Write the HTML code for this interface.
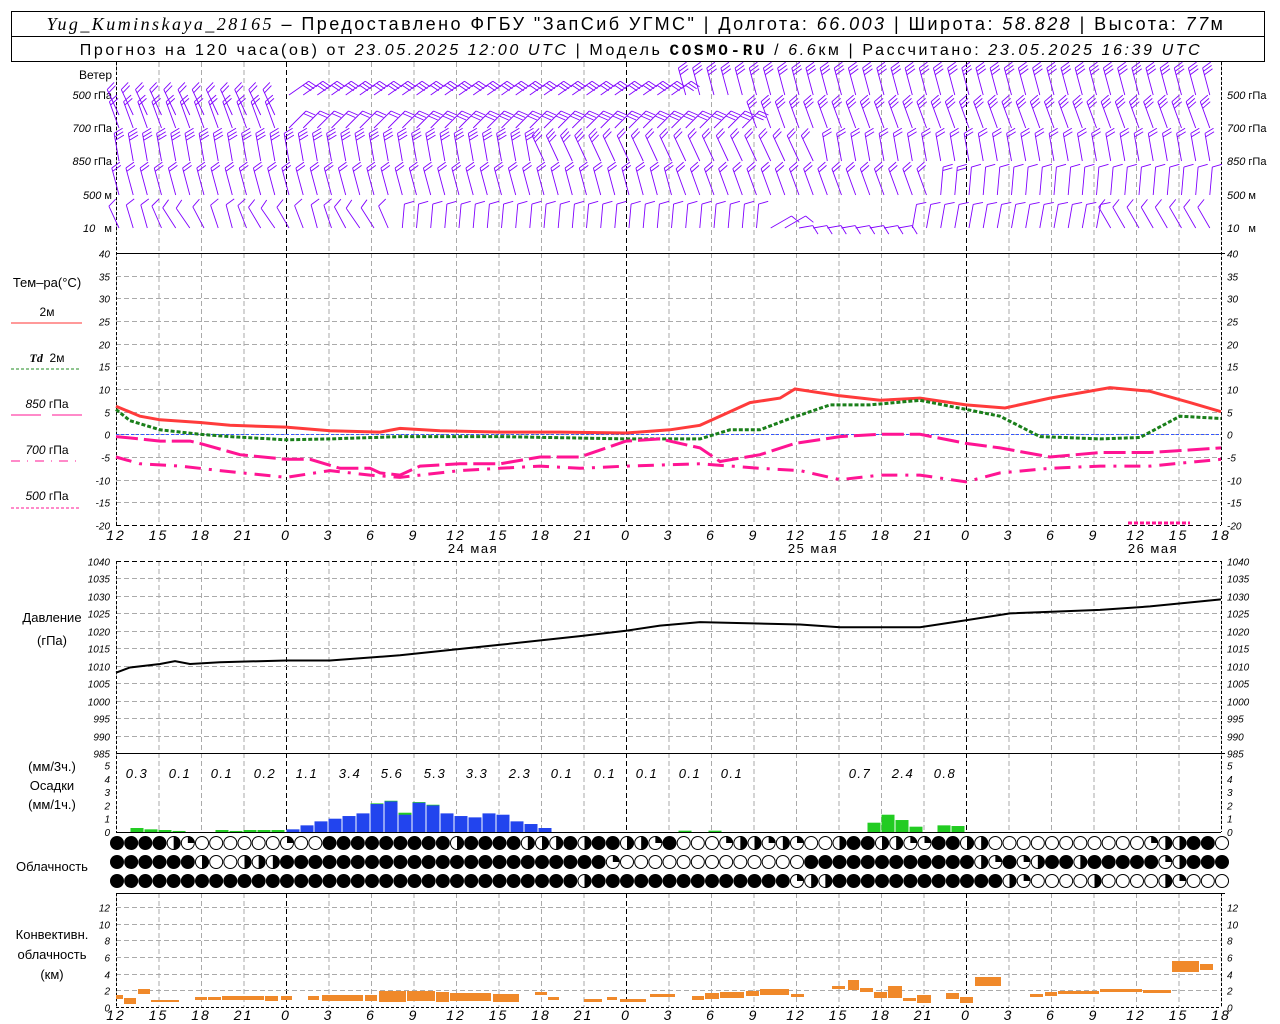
<!DOCTYPE html>
<html><head><meta charset="utf-8"><style>
body{margin:0;background:#fff;width:1280px;height:1024px;overflow:hidden;font-family:"Liberation Sans",sans-serif}
svg{display:block}
</style></head><body>
<svg id="s" width="1280" height="1024" xmlns="http://www.w3.org/2000/svg" font-family="Liberation Sans, sans-serif">
<rect x="0" y="0" width="1280" height="1024" fill="#fff"/>
<rect x="11.5" y="11.5" width="1253" height="50" fill="none" stroke="#000"/>
<line x1="11" y1="36.5" x2="1265" y2="36.5" stroke="#000"/>
<text x="636" y="30" text-anchor="middle" font-size="18" letter-spacing="2.45"><tspan font-family="Liberation Serif" font-style="italic">Yug_Kuminskaya_28165</tspan> – Предоставлено ФГБУ "ЗапСиб УГМС" | Долгота: <tspan font-style="italic">66.003</tspan> | Широта: <tspan font-style="italic">58.828</tspan> | Высота: <tspan font-style="italic">77</tspan>м</text>
<text x="641" y="55" text-anchor="middle" font-size="16" letter-spacing="2.6">Прогноз на 120 часа(ов) от <tspan font-style="italic">23.05.2025 12:00 UTC</tspan> | Модель <tspan font-family="Liberation Mono" font-weight="bold">COSMO-RU</tspan> / <tspan font-style="italic">6.6</tspan>км | Рассчитано: <tspan font-style="italic">23.05.2025 16:39 UTC</tspan></text>
<g font-size="12" text-anchor="end">
<text x="112" y="79">Ветер</text>
<text x="112" y="99" font-size="11"><tspan font-style="italic">500</tspan> гПа</text>
<text x="112" y="132" font-size="11"><tspan font-style="italic">700</tspan> гПа</text>
<text x="112" y="165" font-size="11"><tspan font-style="italic">850</tspan> гПа</text>
<text x="112" y="199" font-size="11"><tspan font-style="italic">500</tspan> м</text>
<text x="112" y="232" font-size="11"><tspan font-style="italic">10</tspan> &#160;&#160;м</text>
</g>
<g font-size="11">
<text x="1227" y="99"><tspan font-style="italic">500</tspan> гПа</text>
<text x="1227" y="132"><tspan font-style="italic">700</tspan> гПа</text>
<text x="1227" y="165"><tspan font-style="italic">850</tspan> гПа</text>
<text x="1227" y="199"><tspan font-style="italic">500</tspan> м</text>
<text x="1227" y="232"><tspan font-style="italic">10</tspan> &#160;&#160;м</text>
</g>
<g font-size="13" text-anchor="middle">
<text x="47" y="287">Тем–ра(°С)</text>
<text x="47" y="316" font-size="12">2м</text>
<text x="47" y="362" font-size="12"><tspan font-style="italic" font-weight="bold" font-family="Liberation Serif">Td</tspan> &#160;2м</text>
<text x="47" y="408" font-size="12"><tspan font-style="italic">850</tspan> гПа</text>
<text x="47" y="454" font-size="12"><tspan font-style="italic">700</tspan> гПа</text>
<text x="47" y="500" font-size="12"><tspan font-style="italic">500</tspan> гПа</text>
<text x="52" y="622">Давление</text>
<text x="52" y="645">(гПа)</text>
<text x="52" y="771">(мм/3ч.)</text>
<text x="52" y="790">Осадки</text>
<text x="52" y="809">(мм/1ч.)</text>
<text x="52" y="871">Облачность</text>
<text x="52" y="939">Конвективн.</text>
<text x="52" y="959">облачность</text>
<text x="52" y="979">(км)</text>
</g>
<line x1="11" y1="323" x2="82" y2="323" stroke="#ff3333" stroke-width="1"/>
<line x1="11" y1="369" x2="79" y2="369" stroke="#228b22" stroke-dasharray="3,2"/>
<line x1="11" y1="415" x2="41" y2="415" stroke="#ff1493"/><line x1="52" y1="415" x2="82" y2="415" stroke="#ff1493"/>
<line x1="11" y1="461" x2="82" y2="461" stroke="#ff1493" stroke-dasharray="9,7,1,7"/>
<line x1="11" y1="508" x2="79" y2="508" stroke="#ff1493" stroke-dasharray="3,2"/>
<g id="g"></g>
</svg>
<script>
const NS="http://www.w3.org/2000/svg",G=document.getElementById('g');
function el(t,a,txt){const e=document.createElementNS(NS,t);for(const k in a)e.setAttribute(k,a[k]);if(txt!=null)e.textContent=txt;G.appendChild(e);return e;}
const L=116,R=1221,PX=14.1667;
function X(h){return L+h*PX}
const panels=[[62,253],[253,525],[561,753],[753,832],[893,1007]];
for(let k=0;k<=26;k++){const x=L+42.5*k+0.5;const mid=(k%8==4);
 for(const p of panels){el('line',{x1:x,y1:p[0],x2:x,y2:p[1],stroke:mid?'#000':'#aaa','stroke-dasharray':'5,3','stroke-width':1});}}
function TY(t){return 253+(40-t)*4.5333}
for(let t=40;t>=-20;t-=5){const y=Math.round(TY(t))+0.5;
 if(t<40)el('line',{x1:L,y1:y,x2:R,y2:y,stroke:t==-20?'#000':'#aaa','stroke-dasharray':'5,3'});
 el('text',{x:110,y:y+4,'font-size':10,'font-style':'italic','text-anchor':'end'},t);
 el('text',{x:1227,y:y+4,'font-size':10,'font-style':'italic'},t);}
el('line',{x1:L,y1:253.5,x2:R+4,y2:253.5,stroke:'#000'});
function PY(p){return 561+(1040-p)*3.4909}
for(let p=1040;p>=985;p-=5){const y=Math.round(PY(p))+0.5;
 if(p<1040&&p>985)el('line',{x1:L,y1:y,x2:R,y2:y,stroke:'#aaa','stroke-dasharray':'5,3'});
 if(p==1040)el('line',{x1:L,y1:y,x2:R,y2:y,stroke:'#000','stroke-dasharray':'5,3'});
 el('text',{x:110,y:y+4,'font-size':10,'font-style':'italic','text-anchor':'end'},p);
 el('text',{x:1227,y:y+4,'font-size':10,'font-style':'italic'},p);}
el('line',{x1:L,y1:753.5,x2:R+4,y2:753.5,stroke:'#000'});
for(let m=0;m<=5;m++){const y=832-m*13.3;el('text',{x:110,y:y+4,'font-size':10,'font-style':'italic','text-anchor':'end'},m);el('text',{x:1227,y:y+4,'font-size':10,'font-style':'italic'},m);}
el('line',{x1:L,y1:832.5,x2:R,y2:832.5,stroke:'#000'});
function CY(k){return 1007-k*8.35}
for(let k=0;k<=12;k+=2){const y=Math.round(CY(k))+0.5;
 if(k>0)el('line',{x1:L,y1:y,x2:R,y2:y,stroke:'#aaa','stroke-dasharray':'5,3'});else el('line',{x1:L,y1:y,x2:R,y2:y,stroke:'#000','stroke-dasharray':'3,2'});
 el('text',{x:110,y:y+4,'font-size':10,'font-style':'italic','text-anchor':'end'},k);el('text',{x:1227,y:y+4,'font-size':10,'font-style':'italic'},k);}
el('line',{x1:L,y1:893.5,x2:R+4,y2:893.5,stroke:'#000'});
for(const x of [L+0.5,R+0.5]){for(const p of [[62,525],[561,832],[893,1007]])el('line',{x1:x,y1:p[0],x2:x,y2:p[1],stroke:'#000','stroke-dasharray':'3,2'});}
const hrs=[12,15,18,21,0,3,6,9];
for(let k=0;k<=26;k++){const x=L+42.5*k;const h=hrs[k%8];
 el('text',{x:x,y:540,'font-size':14,'font-style':'italic','text-anchor':'middle','letter-spacing':'2'},h);
 el('text',{x:x,y:1020,'font-size':14,'font-style':'italic','text-anchor':'middle','letter-spacing':'2'},h);}
[['24 мая',473],['25 мая',813],['26 мая',1153]].forEach(d=>el('text',{x:d[1],y:553,'font-size':13,'text-anchor':'middle','letter-spacing':'1.5'},d[0]));
el('line',{x1:L,y1:434.5,x2:R,y2:434.5,stroke:'#3355ff','stroke-dasharray':'3,2'});
function line(pts,f,attrs){const d=pts.map(p=>p[0]+','+f(p[1]).toFixed(1)).join(' ');const a={points:d,fill:'none'};for(const k in attrs)a[k]=attrs[k];el('polyline',a);}
const T2=[[116,6.2],[140,4],[160,3.2],[200,2.6],[230,2],[286,1.6],[330,0.8],[380,0.5],[400,1.3],[440,0.8],[500,0.5],[560,0.5],[626,0.3],[670,1],[700,2],[720,4],[750,7],[780,8],[795,10],[840,8.5],[880,7.5],[920,8],[966,6.5],[1005,5.8],[1050,8],[1110,10.3],[1150,9.5],[1190,7],[1221,5]];
line(T2,TY,{stroke:'#ff3b3b','stroke-width':3});
const TD=[[116,5.5],[130,3],[160,1],[200,0],[230,-0.5],[286,-1.2],[330,-1],[400,-0.5],[500,-0.5],[626,-1],[700,-1],[730,1],[760,1],[790,3.5],[830,6.5],[870,6.5],[920,7.5],[966,5.5],[1000,4],[1040,-0.5],[1100,-1],[1140,-0.7],[1180,4],[1221,3.5]];
line(TD,TY,{stroke:'#1a7f1a','stroke-width':3,'stroke-dasharray':'4,2'});
const T85=[[116,-0.5],[140,-1],[160,-1.5],[190,-1.5],[200,-2],[240,-4.5],[286,-5.5],[310,-5.5],[340,-7.5],[370,-7.5],[380,-8.5],[400,-9],[420,-7],[460,-6.5],[500,-6.5],[540,-5],[580,-5],[626,-1.5],[660,-1],[700,-3],[720,-6],[760,-4.5],[795,-2],[840,-0.5],[880,0],[920,0],[966,-2],[1000,-3],[1050,-5],[1100,-4],[1150,-4],[1221,-3]];
line(T85,TY,{stroke:'#ff1493','stroke-width':3,'stroke-dasharray':'22,6'});
const T70=[[116,-5],[140,-6.5],[180,-7],[220,-8],[286,-9.5],[330,-8],[370,-9],[400,-9.5],[420,-9],[460,-8],[500,-7.5],[540,-7],[580,-7.5],[626,-7],[700,-6.5],[760,-7.5],[800,-8],[840,-10],[880,-9],[920,-9],[966,-10.5],[1000,-8.5],[1050,-7.5],[1100,-7],[1150,-7],[1221,-5.5]];
line(T70,TY,{stroke:'#ff1493','stroke-width':3,'stroke-dasharray':'16,8,3,8'});
el('line',{x1:1128,y1:523,x2:1190,y2:523,stroke:'#ff1493','stroke-width':3,'stroke-dasharray':'4,2'});
const PR=[[116,1008],[130,1009.5],[160,1010.5],[175,1011.3],[190,1010.5],[220,1011],[286,1011.5],[330,1011.5],[400,1013],[500,1016],[580,1018.5],[626,1020],[660,1021.5],[700,1022.5],[800,1021.8],[840,1021],[920,1021],[966,1023],[1010,1025],[1100,1026],[1150,1027],[1221,1029]];
line(PR,PY,{stroke:'#000','stroke-width':2});
const blue=[[293,.2],[307,.5],[321,.8],[335,1],[349,1.2],[363,1.4],[377,2.1],[391,2.3],[405,1.3],[419,2.2],[433,2],[447,1.4],[461,1.2],[475,1.1],[489,1.4],[503,1.3],[517,0.8],[531,0.6],[545,0.3]];
const green=[[137,.3],[151,.2],[165,.15],[179,.08],[222,.15],[236,.08],[250,.15],[264,.15],[278,.15],[685,.1],[715,.1],[874,.7],[888,1.3],[902,.9],[916,.4],[944,.5],[958,.45],[405,1.45],[391,2.35],[377,2.15],[419,2.25],[433,2.05]];
green.forEach(b=>el('rect',{x:b[0]-6.5,y:832-b[1]*13.3,width:13,height:b[1]*13.3,fill:'#22cc22'}));
blue.forEach(b=>el('rect',{x:b[0]-6.5,y:832-b[1]*13.3,width:13,height:b[1]*13.3,fill:'#2244ee'}));
[['0.3',137],['0.1',180],['0.1',222],['0.2',265],['1.1',307],['3.4',350],['5.6',392],['5.3',435],['3.3',477],['2.3',520],['0.1',562],['0.1',605],['0.1',647],['0.1',690],['0.1',732],['0.7',860],['2.4',903],['0.8',945]].forEach(p=>el('text',{x:p[1],y:778,'font-size':13,'font-style':'italic','text-anchor':'middle','letter-spacing':'1.5'},p[0]));
const rows=["FFFFHQEEEEEEQEEFFFFFFFFFHFFFFHHHFHFFHHQFEEEQHHQHQEEHFFHHQQFFHHEEEEEEEEEEEQHHFF",
"FFFFFFHEEHHHFFFFFFFFFFFFFFFFFFFFFFFQEEEEEEEEEEEEEFFFFFFFFFFFFHQFQHFFHFFFFFQHFFFF",
"FFFFFFFFFFFFFFFFFFFFFFFFFFFFFFFFFHFFFFFFFFFFFFFFQHHFFFFFFFFFFFFHQEEEEHEEEEHQEEEEE"];
const ry=[843,862,881];
for(let r=0;r<3;r++){for(let i=0;i<79;i++){const c=rows[r][i]||'E';const x=117+i*PX,y=ry[r];
 if(c=='F')el('circle',{cx:x,cy:y,r:7,fill:'#000'});
 else{el('circle',{cx:x,cy:y,r:6.5,fill:'#fff',stroke:'#000','stroke-width':1});
  if(c=='H')el('path',{d:`M${x} ${y-7}A7 7 0 0 1 ${x} ${y+7}Z`,fill:'#000'});
  if(c=='Q')el('path',{d:`M${x} ${y}V${y-7}A7 7 0 0 1 ${x+7} ${y}Z`,fill:'#000'});}}}
const cv=[[116,124,995,999],[124,137,998,1004],[138,151,989,994],[151,180,1000,1002],[195,208,997,1000],[208,222,997,1000],[222,265,996,1000],[265,279,996,1001],[281,293,996,1000],[308,320,996,1000],[322,364,995,1001],[365,378,995,1001],[379,407,991,1002],[407,436,991,1001],[436,450,992,1002],[450,492,993,1001],[493,520,994,1002],[535,548,992,995],[548,560,997,1000],[584,603,999,1002],[607,618,997,1000],[620,647,999,1002],[650,676,994,997],[692,705,996,1000],[705,720,993,999],[720,745,992,998],[746,760,991,996],[760,790,989,995],[791,805,994,997],[832,846,986,989],[848,860,980,990],[860,874,988,992],[874,888,992,998],[888,903,986,998],[903,917,998,1001],[917,932,995,1003],[946,960,993,999],[960,974,997,1003],[975,1002,977,986],[1030,1044,994,997],[1045,1058,992,996],[1058,1100,991,994],[1100,1143,989,992],[1143,1172,990,993],[1172,1200,961,972],[1200,1214,964,970]];
cv.forEach(b=>el('rect',{x:b[0],y:b[2],width:b[1]-b[0]-1,height:b[3]-b[2],fill:'#f0892a'}));
const rowY=[95,128,161,195,228];
function barb(x,yb,ang,n,len){const a=ang*Math.PI/180;const sx=Math.sin(a),cy=Math.cos(a);
 const tx=x+sx*len,ty=yb-cy*len;let d=`M${x.toFixed(1)} ${yb}L${tx.toFixed(1)} ${ty.toFixed(1)}`;
 for(let j=0;j<n;j++){const bx=tx-sx*j*3.5,by=ty+cy*j*3.5;const ba=a+1.2;d+=`M${bx.toFixed(1)} ${by.toFixed(1)}l${(Math.sin(ba)*10).toFixed(1)} ${(-Math.cos(ba)*10).toFixed(1)}`;}
 el('path',{d:d,stroke:'#8000ff',fill:'none','stroke-width':0.9});}
for(let i=0;i<78;i++){const x=X(i)+3;
 let a10=i<20?-25+10*Math.sin(i):(i<46?5:(i<56?60:(i<70?10:-30)));
 if(!(i>=48&&i<56))barb(x,rowY[4],a10,1,24);
 else barb(x,rowY[4],80,1,14);
 barb(x,rowY[3],i<40?-15:(i<58?-20:5),i<40?2:(i<60?2:1),28);
 barb(x,rowY[2],i<30?-10:(i<50?-25:-10),i<35?3:2,28);
 barb(x,rowY[1],(i>=12&&i<45)?45:-20,i<20?2:3,(i>=12&&i<45)?24:28);
 if(i<12)barb(x,rowY[0]+20,-25,2,28);
 else barb(x,rowY[0],(i<40)?55:-15,3,(i<40)?24:28);}
</script>
</body></html>
